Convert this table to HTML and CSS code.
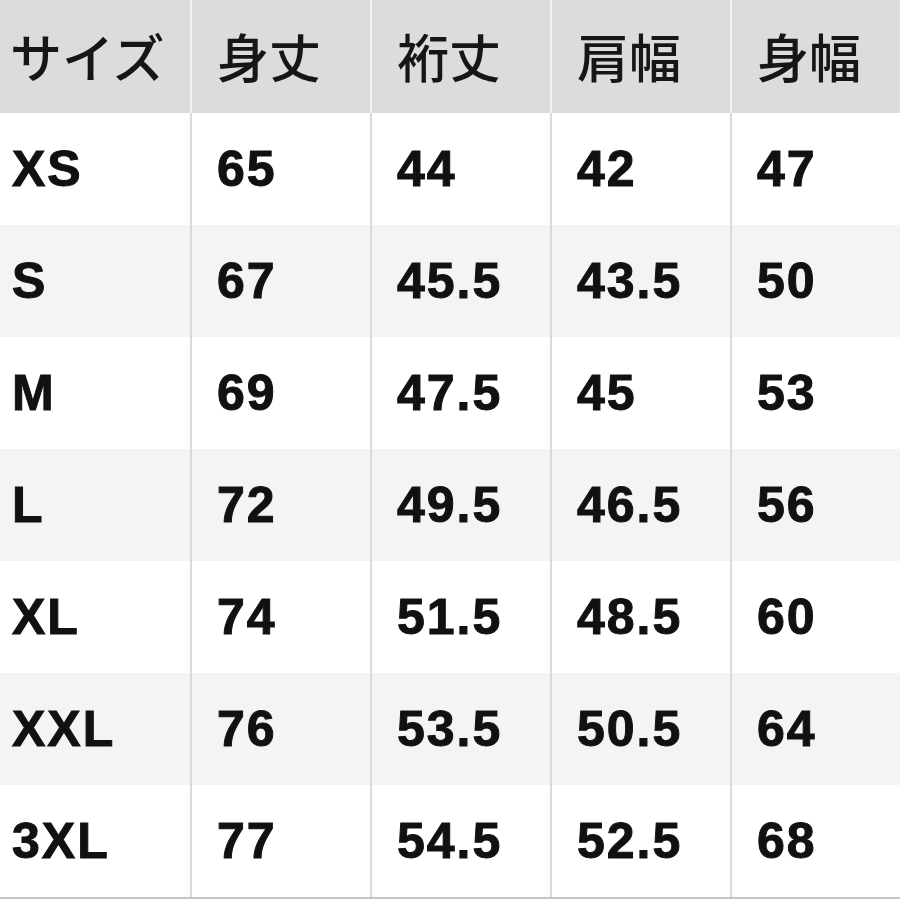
FILE: index.html
```html
<!DOCTYPE html>
<html lang="ja">
<head>
<meta charset="utf-8">
<title>サイズ表</title>
<link rel="stylesheet" href="styles.css">
</head>
<body>
<div class="table">
  <div class="row head">
    <div class="cell">サイズ</div><div class="cell">身丈</div><div class="cell">裄丈</div><div class="cell">肩幅</div><div class="cell">身幅</div>
  </div>
  <div class="row">
    <div class="cell">XS</div><div class="cell">65</div><div class="cell">44</div><div class="cell">42</div><div class="cell">47</div>
  </div>
  <div class="row alt">
    <div class="cell">S</div><div class="cell">67</div><div class="cell">45.5</div><div class="cell">43.5</div><div class="cell">50</div>
  </div>
  <div class="row">
    <div class="cell">M</div><div class="cell">69</div><div class="cell">47.5</div><div class="cell">45</div><div class="cell">53</div>
  </div>
  <div class="row alt">
    <div class="cell">L</div><div class="cell">72</div><div class="cell">49.5</div><div class="cell">46.5</div><div class="cell">56</div>
  </div>
  <div class="row">
    <div class="cell">XL</div><div class="cell">74</div><div class="cell">51.5</div><div class="cell">48.5</div><div class="cell">60</div>
  </div>
  <div class="row alt">
    <div class="cell">XXL</div><div class="cell">76</div><div class="cell">53.5</div><div class="cell">50.5</div><div class="cell">64</div>
  </div>
  <div class="row last">
    <div class="cell">3XL</div><div class="cell">77</div><div class="cell">54.5</div><div class="cell">52.5</div><div class="cell">68</div>
  </div>
</div>
</body>
</html>
```

FILE: styles.css
```css
html, body {
  margin: 0;
  padding: 0;
  background: #ffffff;
}
.table {
  width: 900px;
  height: 900px;
  overflow: hidden;
  display: flex;
  flex-direction: column;
}
.row {
  display: grid;
  grid-template-columns: 190px 180px 180px 180px 170px;
  height: 112px;
  background: #ffffff;
  font-family: "Liberation Sans", Arial, sans-serif;
  font-weight: 700;
  font-size: 50px;
  letter-spacing: 2px;
  -webkit-text-stroke: 1px #111111;
  color: #111111;
}
.row.alt {
  background: #f4f4f4;
}
.row.head {
  height: 113px;
  background: #dcdcdc;
  font-family: "Noto Sans CJK JP", "Noto Sans", sans-serif;
  font-weight: 500;
  font-size: 52px;
  letter-spacing: 0;
  -webkit-text-stroke: 0;
  color: #161616;
}
.row.last {
  border-bottom: 2px solid #c4c4c4;
}
.cell {
  display: flex;
  align-items: center;
  padding-left: 25px;
  border-left: 2px solid #dadada;
}
.cell:first-child {
  padding-left: 12px;
  border-left: none;
}
.head .cell {
  border-left-color: #f2f2f2;
  padding-bottom: 2px;
}
.head .cell:first-child {
  padding-left: 10px;
}
```
